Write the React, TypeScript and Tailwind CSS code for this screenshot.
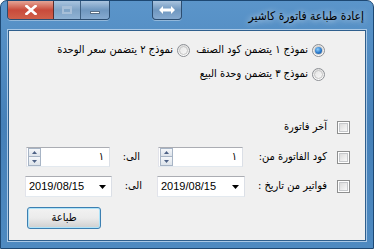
import React from "react";

const arabic = { fontFamily: '"DejaVu Sans Condensed", "DejaVu Sans", sans-serif' };
const latin = { fontFamily: '"Liberation Sans", Arial, sans-serif' };

function Radio({ checked }: { checked?: boolean }) {
    return (
        <span className="w-[13px] h-[13px] shrink-0 rounded-full border border-[#8c8f94] bg-gradient-to-b from-[#e0e0e0] to-[#ffffff] flex items-center justify-center">
            <span className="w-[9px] h-[9px] rounded-full bg-gradient-to-br from-[#e6e6e6] to-[#f8f8f8] border border-[#c5c5c5] flex items-center justify-center">
                {checked && (
                    <span className="w-[7px] h-[7px] rounded-full bg-[radial-gradient(circle_at_40%_35%,#8ed0ff_0%,#2a78c8_55%,#1a4f8e_100%)]" />
                )}
            </span>
        </span>
    );
}

function Check() {
    return (
        <span className="w-[13px] h-[13px] shrink-0 border border-[#8e8f8f] bg-white p-[1px]">
            <span className="block w-full h-full border border-[#c6c8cb] bg-gradient-to-br from-[#dcdcdc] to-[#f9f9f9]" />
        </span>
    );
}

function Spin({ w }: { w: string }) {
    return (
        <div className={`${w} h-[20px] border border-[#abadb3] border-b-[#e3e9ef] border-l-[#e2e3ea] border-r-[#dbdfe6] bg-white flex items-center`} dir="ltr">
            <div className="flex flex-col ml-[1px] w-[13px] h-[18px]">
                <div className="h-[9px] border border-[#a7b4c5] bg-gradient-to-b from-[#f5f7fa] to-[#dde3ea] flex items-center justify-center">
                    <svg width="5" height="3" viewBox="0 0 5 3"><path d="M0 3 L2.5 0 L5 3 Z" fill="#4d6185" /></svg>
                </div>
                <div className="h-[9px] border border-t-0 border-[#a7b4c5] bg-gradient-to-b from-[#f5f7fa] to-[#dde3ea] flex items-center justify-center">
                    <svg width="5" height="3" viewBox="0 0 5 3"><path d="M0 0 L2.5 3 L5 0 Z" fill="#4d6185" /></svg>
                </div>
            </div>
            <span className="flex-1 text-right pr-[5px] text-[11px] text-black" style={arabic}>١</span>
        </div>
    );
}

function DatePick({ w }: { w: string }) {
    return (
        <div className={`${w} h-[21px] border border-[#abadb3] border-b-[#e3e9ef] border-l-[#e2e3ea] border-r-[#dbdfe6] bg-white flex items-center pl-[3px] pr-[5px]`} dir="ltr">
            <span className="flex-1 text-[11px] text-black" style={latin}>2019/08/15</span>
            <svg width="7" height="4" viewBox="0 0 7 4"><path d="M0 0 L7 0 L3.5 4 Z" fill="#000" /></svg>
        </div>
    );
}

export default function App() {
    return (
        <div className="w-[374px] h-[249px] border border-[#1d4873] rounded-t-[7px] flex flex-col overflow-hidden bg-gradient-to-b from-[#5b95ca] via-[#4580b8] to-[#4e8ac1]">
            {/* Title bar */}
            <div className="h-[29px] shrink-0 flex items-start">
                <div className="ml-[6px] flex h-[19px] rounded-b-[4px] border border-t-0 border-[#2c4d70] overflow-hidden shadow-[0_1px_0_rgba(255,255,255,0.35)]">
                    <div className="w-[46px] h-full bg-gradient-to-b from-[#e4a496] via-[#c94a3b] to-[#d0604a] flex items-center justify-center border-r border-[#5a2d2d]">
                        <svg width="12" height="10" viewBox="0 0 12 10">
                            <path d="M1.5 1 L10.5 9 M10.5 1 L1.5 9" stroke="#fff" strokeWidth="2.6" strokeLinecap="square" />
                        </svg>
                    </div>
                    <div className="w-[27px] h-full bg-gradient-to-b from-[#a9c4df] via-[#7fa3c6] to-[#8fb2d4] flex items-center justify-center border-r border-[#3d5f82]">
                        <span className="w-[10px] h-[8px] border-2 border-[#a7bfd8] border-t-[3px]" />
                    </div>
                    <div className="w-[28px] h-full bg-gradient-to-b from-[#a9c4df] via-[#6f97bf] to-[#86aad0] flex items-end justify-center pb-[5px]">
                        <span className="w-[10px] h-[3px] bg-white border border-[#5a6f86]" />
                    </div>
                </div>
                <div className="ml-[42px] w-[30px] h-[19px] rounded-b-[4px] border border-t-0 border-[#2c4d70] bg-gradient-to-b from-[#a9c4df] via-[#6f97bf] to-[#86aad0] flex items-center justify-center shadow-[0_1px_0_rgba(255,255,255,0.35)]">
                    <svg width="16" height="8" viewBox="0 0 16 8">
                        <path d="M0 4 L4 0 L4 2.5 L12 2.5 L12 0 L16 4 L12 8 L12 5.5 L4 5.5 L4 8 Z" fill="#fff" />
                    </svg>
                </div>
                <div
                    dir="rtl"
                    className="flex-1 pr-[9px] pt-[6px] text-[12px] text-black [text-shadow:0_0_6px_rgba(255,255,255,0.9)]"
                    style={arabic}
                >
                    إعادة طباعة فاتورة كاشير
                </div>
            </div>

            {/* Client area */}
            <div className="flex-1 px-[7px] pb-[7px]">
                <div
                    dir="rtl"
                    className="h-full bg-[#f0f0f0] border border-[#2f5f8d] shadow-[0_0_0_1px_#a9c8e6] flex flex-col pt-[11px] text-[11px] text-black whitespace-nowrap"
                    style={arabic}
                >
                    <div className="h-[16px] flex items-center pr-[40px]">
                        <div className="w-[135px] flex items-center gap-[4px]">
                            <Radio checked />
                            <span>نموذج ١ يتضمن كود الصنف</span>
                        </div>
                        <div className="flex items-center gap-[4px]">
                            <Radio />
                            <span>نموذج ٢ يتضمن سعر الوحدة</span>
                        </div>
                    </div>
                    <div className="h-[16px] mt-[8px] flex items-center pr-[40px] gap-[4px]">
                        <Radio />
                        <span>نموذج ٣ يتضمن وحدة البيع</span>
                    </div>

                    <div className="h-[16px] mt-[37px] flex items-center pr-[15px]">
                        <Check />
                        <span className="mr-[10px]">آخر فاتورة</span>
                    </div>

                    <div className="h-[20px] mt-[12px] flex items-center pr-[15px]">
                        <Check />
                        <span className="w-[94px] pr-[10px]">كود الفاتورة من:</span>
                        <Spin w="w-[85px]" />
                        <span className="w-[48px] pr-[18px]">الى:</span>
                        <Spin w="w-[84px]" />
                    </div>

                    <div className="h-[21px] mt-[9px] flex items-center pr-[15px]">
                        <Check />
                        <span className="w-[92px] pr-[10px]">فواتير من تاريخ :</span>
                        <DatePick w="w-[88px]" />
                        <span className="w-[45px] pr-[15px]">الى:</span>
                        <DatePick w="w-[87px]" />
                    </div>

                    <button className="self-end ml-[18px] mt-[10px] w-[74px] h-[22px] rounded-[3px] border border-[#3c7fb1] bg-gradient-to-b from-[#f2f2f2] via-[#ebebeb] to-[#cfcfcf] shadow-[inset_0_0_0_1px_#aee3f9] text-[11px]">
                        طباعة
                    </button>
                </div>
            </div>
        </div>
    );
}
